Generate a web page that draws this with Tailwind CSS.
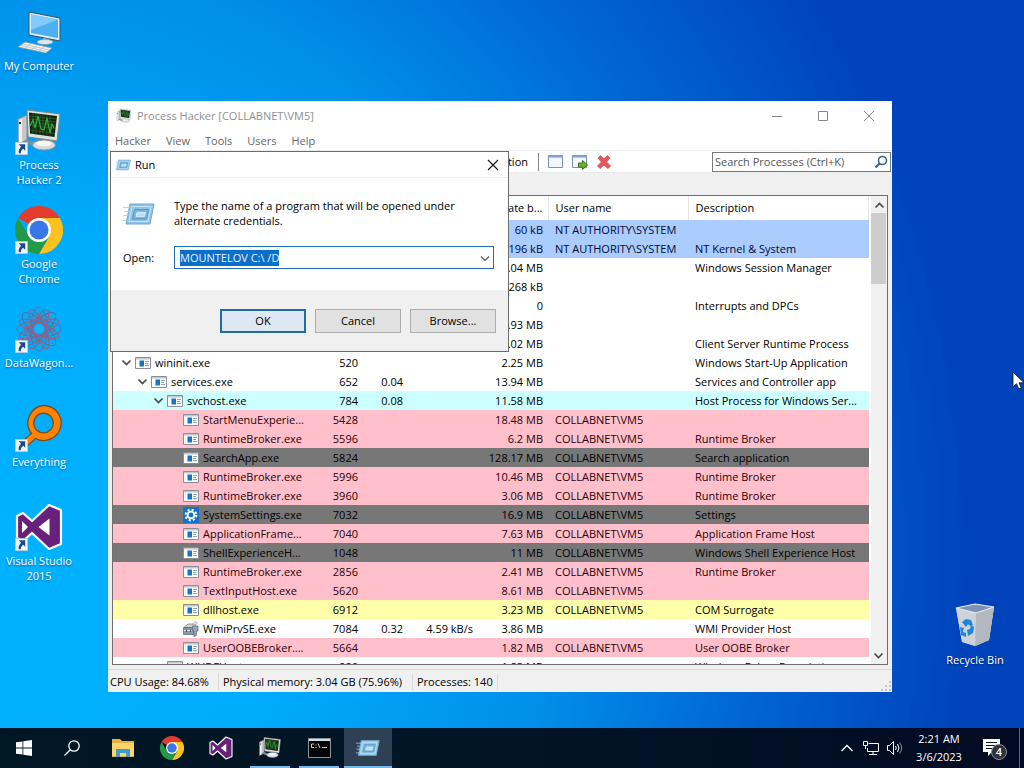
<!DOCTYPE html>
<html lang="en">
<head>
    <meta charset="UTF-8">
    <meta name="viewport" content="width=device-width, initial-scale=1.0">
    <title>Desktop</title>
    <script src="https://cdn.jsdelivr.net/npm/@tailwindcss/browser@4"></script>
</head>
<body class="h-screen flex flex-col overflow-hidden font-['Open_Sans','Noto_Sans',sans-serif] text-[11px] leading-4 text-black cursor-default select-none">

    <!-- Icon library -->
    <svg class="hidden">
        <symbol id="i-app" viewBox="0 0 16 16">
            <path d="M.5 2.500h15v11H.5z" fill="#fff" stroke="#8a8f94"/>
            <path d="M1 3h14v1.500H1z" fill="#c3c8cc"/>
            <path d="M4.500 5.500h4.500v6H4.500z" fill="#1673c4"/>
            <path d="M10 6.500h4M10 8.500h3M10 10.500h4" stroke="#8aa6bd"/>
        </symbol>
        <symbol id="i-gear" viewBox="0 0 16 16">
            <path d="M0 0h16v16H0z" fill="#0f74cc"/>
            <circle cx="8" cy="8" r="5.300" fill="none" stroke="#fff" stroke-width="2.200" stroke-dasharray="2.100 2.060"/>
            <circle cx="8" cy="8" r="3.400" fill="none" stroke="#fff" stroke-width="1.900"/>
        </symbol>
        <symbol id="i-wmi" viewBox="0 0 16 16">
            <path d="M1 6.500l4-3.500h8l-2 3.500z" fill="#cfd4d8" stroke="#6d7780" stroke-width=".7"/>
            <path d="M.5 6.500h10.500v7H.5z" fill="#8d98a3" stroke="#5b6670" stroke-width=".7"/>
            <path d="M1 9.500h9.500" stroke="#dfe5ea"/>
            <path d="M9.500 3l3.500-2.500 1.500 1.500-2 2z" fill="#e6eaee" stroke="#8a949d" stroke-width=".6"/>
            <path d="M9.500 5h5.500v5h-1.500v4.500L11 15.500V10H9.500z" fill="#91a8bf" stroke="#5a6b7c" stroke-width=".7"/>
            <path d="M3.500 8.500v2.500M7.500 8.500v2.500" stroke="#42505c"/>
        </symbol>
        <symbol id="i-chev" viewBox="0 0 16 16">
            <path d="M3.500 5.500l4 4 4-4" fill="none" stroke="#4a4a4a" stroke-width="1.700"/>
        </symbol>
        <symbol id="i-run" viewBox="0 0 32 24">
            <path d="M7 2h24l-4 20H3z" fill="#8fc4e8" stroke="#6fa8d2"/>
            <path d="M9 4.500h19l-3 15H6z" fill="none" stroke="#c6e4f6"/>
            <path d="M11.500 7.500h14l-2 9.500h-14z" fill="#79b5df" stroke="#5794c3"/>
            <path d="M14 10.500h8.500l-1 4h-8.500z" fill="#b9dff5" stroke="#e4f4fd" stroke-width=".8"/>
            <path d="M0 5.500h7M1.500 9.500h5M.5 13.500h5M0 18.500h4" stroke="#a8d2ef"/>
        </symbol>
        <symbol id="i-ph" viewBox="0 0 48 48">
            <path d="M3 12l9-4v26l-9 5z" fill="#c3c8cb" stroke="#888"/>
            <path d="M4 13l3-1v25l-3 1z" fill="#f0f2f2"/>
            <path d="M4 15h2v2H4z" fill="#234"/>
            <path d="M12 32l16 6-5 3-16-6z" fill="#6f91a8"/>
            <ellipse cx="29" cy="38" rx="11.500" ry="5" fill="#d8dcde" stroke="#8c9499"/>
            <ellipse cx="29" cy="36.500" rx="8" ry="2.800" fill="#f5f6f6"/>
            <path d="M12 3l33 4-3 27-29-4z" fill="#dfe2e3" stroke="#7e8588"/>
            <path d="M14 5.500l28 3.500-2.500 21L15 26.500z" fill="#12260f"/>
            <path d="M14.500 9l27 3M14.500 12l26.500 3M15 15l26 3.300M15 18l25 3.500M15 23l25 3.500M18 6v21M21 6.500v21M25 7v21M28 7v21M32 7.500v21M35 8v21" stroke="#33602e" stroke-width=".8"/>
            <path d="M15 19l3-6 2 8 3-12 3 13 3 1 3-12 3 15 2-9 2 4" fill="none" stroke="#2fae3f" stroke-width="1.200"/>
        </symbol>
        <symbol id="i-chrome" viewBox="0 0 48 48">
            <path d="M24 24L3.200 12A24 24 0 0 1 44.800 12z" fill="#e33b2e"/>
            <path d="M24 12h20.800A24 24 0 0 1 24 48l10.400-18z" fill="#fcc31e"/>
            <path d="M3.200 12l10.400 18a12 12 0 0 0 20.800 0L24 48A24 24 0 0 1 3.200 12z" fill="#229a48"/>
            <circle cx="24" cy="24" r="12" fill="#fff"/>
            <circle cx="24" cy="24" r="9.500" fill="#3a76e8"/>
        </symbol>
        <symbol id="i-vs" viewBox="0 0 48 48">
            <path d="M34 2l12 5v34l-12 5-17-16-9 8-6-3V13l6-3 9 8z" fill="#68217a" stroke="#fff" stroke-width="2.200" stroke-linejoin="round"/>
            <path d="M34.500 15.500v17L23.500 24zM7 18v12l6-6z" fill="#fff"/>
        </symbol>
        <symbol id="i-shortcut" viewBox="0 0 14 14">
            <path d="M.5.5h13v13H.5z" fill="#f4f6f8" stroke="#b8c8d6"/>
            <path d="M4 2.500h7v7L8.800 7.300C7 8.500 6.200 10 6.300 12H4C3.500 9 4.500 7 6.500 5z" fill="#1e4a8c"/>
        </symbol>
    </svg>

    <main class="relative flex-1 bg-[radial-gradient(ellipse_95%_140%_at_0%_75%,#00b2ff_0%,#00adfd_30%,#008ee9_58%,#0066d3_78%,#0043bb_100%)]">

        <!-- Desktop shortcuts -->
        <nav class="w-[78px] pt-2 text-white text-center [text-shadow:0_1px_2px_rgba(0,40,90,.6)]">
            <a href="#" class="flex flex-col items-center h-[99px]">
                <svg class="size-12 shrink-0" viewBox="0 0 48 48">
                    <path d="M14 4l31 6v23l-31-6z" fill="#dcebf5" stroke="#34546c"/>
                    <path d="M16 6.500l27 5v18.500l-27-5z" fill="#4db0f2"/>
                    <path d="M16 6.500l27 5L16 22z" fill="#80cbfa"/>
                    <path d="M28 30l6 1v3l-6-1z" fill="#9fb3c0"/>
                    <ellipse cx="30" cy="34" rx="8" ry="2.500" fill="#dfe7ec" stroke="#8c9aa5" stroke-width=".6"/>
                    <path d="M10 34l27 6-6 5-28-6z" fill="#f3f5f6" stroke="#8799a6" stroke-width=".8"/>
                    <path d="M8 36l26 6M6 37.500l26 6M15 36l-5 4M22 37.500l-5 4M29 39l-5 4" stroke="#b3bfc8" stroke-width=".8"/>
                </svg>
                <span class="leading-[15px] pt-[2px]">My Computer</span>
            </a>
            <a href="#" class="flex flex-col items-center h-[99px]">
                <span class="relative size-12 shrink-0">
                    <svg class="size-12"><use href="#i-ph"/></svg>
                    <svg class="absolute left-0 bottom-0 size-[13px]"><use href="#i-shortcut"/></svg>
                </span>
                <span class="leading-[15px] pt-[2px]">Process<br>Hacker 2</span>
            </a>
            <a href="#" class="flex flex-col items-center h-[99px]">
                <span class="relative size-12 shrink-0">
                    <svg class="size-12"><use href="#i-chrome"/></svg>
                    <svg class="absolute left-0 bottom-0 size-[13px]"><use href="#i-shortcut"/></svg>
                </span>
                <span class="leading-[15px] pt-[2px]">Google<br>Chrome</span>
            </a>
            <a href="#" class="flex flex-col items-center h-[99px]">
                <span class="relative size-12 shrink-0">
                    <svg class="size-12" viewBox="0 0 48 48" fill="none" stroke="#55709f">
                        <ellipse cx="24" cy="24" rx="22" ry="8"/>
                        <ellipse cx="24" cy="24" rx="22" ry="8" transform="rotate(45 24 24)"/>
                        <ellipse cx="24" cy="24" rx="22" ry="8" transform="rotate(90 24 24)"/>
                        <ellipse cx="24" cy="24" rx="22" ry="8" transform="rotate(135 24 24)"/>
                        <g stroke="#9c5c80">
                            <ellipse cx="24" cy="24" rx="21" ry="6" transform="rotate(22 24 24)"/>
                            <ellipse cx="24" cy="24" rx="21" ry="6" transform="rotate(67 24 24)"/>
                            <ellipse cx="24" cy="24" rx="21" ry="6" transform="rotate(112 24 24)"/>
                            <ellipse cx="24" cy="24" rx="21" ry="6" transform="rotate(157 24 24)"/>
                            <circle cx="24" cy="24" r="11"/>
                            <circle cx="24" cy="24" r="7"/>
                        </g>
                        <path d="M24 9l11 4 4 11-4 11-11 4-11-4-4-11 4-11z" stroke="#7c6a96"/>
                        <circle cx="24" cy="24" r="4" fill="#1db4f5" stroke="none"/>
                    </svg>
                    <svg class="absolute left-0 bottom-0 size-[13px]"><use href="#i-shortcut"/></svg>
                </span>
                <span class="leading-[15px] pt-[2px]">DataWagon...</span>
            </a>
            <a href="#" class="flex flex-col items-center h-[99px]">
                <span class="relative size-12 shrink-0">
                    <svg class="size-12" viewBox="0 0 48 48">
                        <path d="M28.500 1.500a17.500 17.500 0 1 1-8 33l-12 11-5-5L16.500 29.500a17.500 17.500 0 0 1 12-28z" fill="#ff8200" stroke="#7a4a1c" stroke-width="1.300"/>
                        <circle cx="28.500" cy="19" r="9.800" fill="#04acfb" stroke="#7a4a1c" stroke-width="1.300"/>
                    </svg>
                    <svg class="absolute left-0 bottom-0 size-[13px]"><use href="#i-shortcut"/></svg>
                </span>
                <span class="leading-[15px] pt-[2px]">Everything</span>
            </a>
            <a href="#" class="flex flex-col items-center h-[99px]">
                <span class="relative size-12 shrink-0">
                    <svg class="size-12"><use href="#i-vs"/></svg>
                    <svg class="absolute left-0 bottom-0 size-[13px]"><use href="#i-shortcut"/></svg>
                </span>
                <span class="leading-[15px] pt-[2px]">Visual Studio<br>2015</span>
            </a>
        </nav>

        <a href="#" class="absolute right-[11px] top-[602px] w-[76px] flex flex-col items-center text-white [text-shadow:0_1px_2px_rgba(0,20,70,.7)]">
            <svg class="size-12" viewBox="0 0 48 48">
                <path d="M5 6l19-4 19 3-5 33-14 6-13-4z" fill="#aab4c2"/>
                <path d="M5 6l20 5 18-6-5 33-14 6-13-4z" fill="#cfd3d9"/>
                <path d="M25 11l18-6-5 33-14 6z" fill="#b2b8c1"/>
                <path d="M5 6l19-4 19 3-18 6z" fill="#7e93b8" stroke="#e8edf2" stroke-width="1.200"/>
                <path d="M11 20l4-3 5 1 2 5-3 1-2-2-2 3zM9 25l4 1-1 4 3 1v4l-5-2zM17 34l5-3 1-6-3-2-1 4-3 1z" fill="#1b87dc"/>
            </svg>
            <span class="leading-[15px] pt-[2px]">Recycle Bin</span>
        </a>

        <!-- Process Hacker -->
        <section class="absolute left-[108px] top-[101px] w-[784px] h-[591px] bg-[#f0f0f0] flex flex-col">
            <header class="h-[30px] shrink-0 bg-white flex items-center pl-2 text-[#8f8f8f]">
                <svg class="size-4"><use href="#i-ph"/></svg>
                <h1 class="ml-[5px] flex-1">Process Hacker [COLLABNET\VM5]</h1>
                <button class="w-[46px] h-7 flex justify-center items-center" aria-label="Minimize"><svg class="size-3" viewBox="0 0 12 12" stroke="#888"><path d="M1 6.500h10"/></svg></button>
                <button class="w-[46px] h-7 flex justify-center items-center" aria-label="Maximize"><svg class="size-3" viewBox="0 0 12 12" stroke="#888" fill="none"><path d="M1.500 1.500h9v9h-9z"/></svg></button>
                <button class="w-[46px] h-7 flex justify-center items-center" aria-label="Close"><svg class="size-3" viewBox="0 0 12 12" stroke="#888"><path d="M1 1l10 10M11 1L1 11"/></svg></button>
            </header>
            <nav class="h-[19px] shrink-0 bg-white flex items-center gap-[15px] pl-[7px] text-[#666]">
                <button>Hacker</button>
                <button>View</button>
                <button>Tools</button>
                <button>Users</button>
                <button>Help</button>
            </nav>
            <div class="h-[23px] shrink-0 bg-white border-y border-[#ececec] flex items-center">
                <button class="w-[420px] text-right">System information</button>
                <span class="ml-[10px] w-px h-[18px] bg-[#888]"></span>
                <button class="ml-[9px]" aria-label="Window"><svg class="size-4" viewBox="0 0 16 16"><path d="M.5 1.500h14v12H.5z" fill="#f3f7fb" stroke="#7493b5"/><path d="M0 1h15v2.500H0z" fill="#7ba0da"/></svg></button>
                <button class="ml-2" aria-label="Find window"><svg class="size-4" viewBox="0 0 16 16"><path d="M.5 1.500h14v12H.5z" fill="#f3f7fb" stroke="#7493b5"/><path d="M0 1h15v2.500H0z" fill="#7ba0da"/><path d="M6.500 9h4V6.500l5 4.500-5 4.500V13h-4z" fill="#6ab42d" stroke="#39761a"/></svg></button>
                <button class="ml-2" aria-label="Terminate"><svg class="size-4" viewBox="0 0 16 16"><path d="M2 4l2.500-2.500L8 5l3.500-3.500L14 4l-3.500 4 4 4-2.500 2.500L8 11l-4 3.500L1.500 12l4-4z" fill="#e8555b" stroke="#cf4a50" stroke-width=".8"/></svg></button>
                <div class="ml-auto mr-px w-[179px] h-5 border border-[#7a7a7a] bg-white flex items-center pr-px">
                    <input type="search" aria-label="Search Processes" placeholder="Search Processes (Ctrl+K)" class="min-w-0 flex-1 pl-[2px] h-4 outline-none placeholder:text-[#555]">
                    <svg class="size-4" viewBox="0 0 16 16" fill="none"><circle cx="9.500" cy="6.500" r="4" stroke="#35648c" stroke-width="1.600"/><path d="M6.500 9.500L2.500 13.500" stroke="#35648c" stroke-width="2.300"/></svg>
                </div>
            </div>
            <div class="h-[22px] shrink-0 bg-[#f0f0f0]"></div>

            <div class="flex-1 min-h-0 mx-1 border border-[#6e6e6e] bg-white flex">
                <div class="flex-1 min-w-0 overflow-hidden">
                    <table class="w-full table-fixed border-collapse">
                        <colgroup>
                            <col class="w-[199px]"><col class="w-[51px]"><col class="w-[45px]"><col class="w-[70px]"><col class="w-[70px]"><col class="w-[140px]"><col>
                        </colgroup>
                        <thead>
                            <tr class="h-6 text-left *:font-normal *:p-0 *:whitespace-nowrap *:border-r *:border-[#e5e5e5]">
                                <th>Name</th><th>PID</th><th>CPU</th><th>I/O total r...</th>
                                <th><div class="pr-[5px] text-right">Private b...</div></th>
                                <th><div class="pl-[7px]">User name</div></th>
                                <th><div class="pl-[7px]">Description</div></th>
                            </tr>
                        </thead>
                        <tbody id="rows"></tbody>
                    </table>
                </div>
                <div class="ml-[2px] w-4 bg-[#f0f0f0] flex flex-col">
                    <button class="h-[17px]" aria-label="Scroll up"><svg class="size-4 rotate-180"><use href="#i-chev"/></svg></button>
                    <div class="h-[71px] w-[15px] bg-[#cdcdcd]"></div>
                    <button class="mt-auto h-[17px]" aria-label="Scroll down"><svg class="size-4"><use href="#i-chev"/></svg></button>
                </div>
            </div>

            <footer class="mt-1 h-[23px] shrink-0 flex items-center pt-px border-t border-[#dcdcdc]">
                <span class="pl-[2px] w-[111px] border-r border-[#d9d9d9]">CPU Usage: 84.68%</span>
                <span class="pl-1 w-[194px] border-r border-[#d9d9d9]">Physical memory: 3.04 GB (75.96%)</span>
                <span class="pl-1 w-[85px] border-r border-[#d9d9d9]">Processes: 140</span>
                <svg class="ml-auto self-end size-3" viewBox="0 0 12 12" fill="#c4c4c4"><path d="M9 1h2v2H9zM9 5h2v2H9zM9 9h2v2H9zM5 5h2v2H5zM5 9h2v2H5zM1 9h2v2H1z"/></svg>
            </footer>
        </section>

        <!-- Run dialog -->
        <form class="absolute left-[110px] top-[151px] w-[399px] h-[201px] bg-white border border-[#6b6b6b] flex flex-col">
            <header class="h-[26px] shrink-0 flex items-center pl-1 pr-[9px] border-b border-[#ececec]">
                <svg class="w-4 h-3"><use href="#i-run"/></svg>
                <h2 class="ml-1 flex-1">Run</h2>
                <button type="button" aria-label="Close"><svg class="size-3" viewBox="0 0 12 12" stroke="#111" stroke-width="1.100"><path d="M1 1l10 10M11 1L1 11"/></svg></button>
            </header>
            <div class="flex-1 pt-5 pl-3 pr-[14px]">
                <div class="flex">
                    <svg class="mt-1 w-8 h-6"><use href="#i-run"/></svg>
                    <p class="ml-[19px] leading-[15px]">Type the name of a program that will be opened under<br>alternate credentials.</p>
                </div>
                <div class="mt-[18px] flex items-center">
                    <label for="open" class="w-[51px]">Open:</label>
                    <div class="flex-1 h-[23px] border border-[#1f72ad] flex items-center pl-[5px]">
                        <input id="open" value="MOUNTELOV C:\ /D" class="flex-1 min-w-0 h-4 outline-none select-text selection:bg-[#0a6fc9] selection:text-[#e6f3ff]">
                        <button type="button" class="w-4" aria-label="Show list"><svg class="size-4" viewBox="0 0 16 16" fill="none" stroke="#555" stroke-width="1.200"><path d="M4 6.500l4 4 4-4"/></svg></button>
                    </div>
                </div>
            </div>
            <footer class="h-[61px] shrink-0 bg-[#f0f0f0] flex items-start justify-end gap-[9px] pt-[19px] pr-3">
                <button type="submit" class="w-[86px] h-6 bg-[#dde8f2] border-2 border-[#1f6ca3]">OK</button>
                <button type="button" class="w-[86px] h-6 bg-[#e1e1e1] border border-[#adadad]">Cancel</button>
                <button type="button" class="w-[86px] h-6 bg-[#e1e1e1] border border-[#adadad]">Browse...</button>
            </footer>
        </form>

        <svg class="absolute right-0 top-[371px] w-3 h-5" viewBox="0 0 12 20"><path d="M1 1v15l3.500-3.300 2.300 5.300 2.500-1-2.300-5.200H12z" fill="#fff" stroke="#111" stroke-width=".8"/></svg>
    </main>

    <!-- Taskbar -->
    <footer class="h-10 shrink-0 flex items-center bg-linear-to-r from-[#001724] via-[#021426] to-[#020b22] text-white">
        <button class="w-12 h-10 flex justify-center items-center" aria-label="Start"><svg class="size-4" viewBox="0 0 16 16" fill="#fff"><path d="M0 2.300l6.500-.9v6.200H0zM7.300 1.300L16 0v7.600H7.300zM0 8.400h6.500v6.200L0 13.700zM7.300 8.400H16V16l-8.700-1.300z"/></svg></button>
        <button class="w-12 h-10 flex justify-center items-center" aria-label="Search"><svg class="size-4" viewBox="0 0 16 16" fill="none" stroke="#fff" stroke-width="1.300"><circle cx="10" cy="6" r="5.200"/><path d="M6.300 9.700L.5 15.500"/></svg></button>
        <div class="flex gap-px ml-[3px]">
            <button class="w-12 h-10 flex justify-center items-center" aria-label="File Explorer">
                <svg class="w-[22px] h-5" viewBox="0 0 22 20"><path d="M0 1h8l2 2h12v16H0z" fill="#e9b23e"/><path d="M0 5h22v13H0z" fill="#fcd668"/><path d="M4 11h14v8h-4v-4H8v4H4z" fill="#3f9bcf"/></svg>
            </button>
            <button class="w-12 h-10 flex justify-center items-center" aria-label="Google Chrome"><svg class="size-6"><use href="#i-chrome"/></svg></button>
            <button class="w-12 h-10 flex justify-center items-center" aria-label="Visual Studio"><svg class="size-6"><use href="#i-vs"/></svg></button>
            <button class="w-12 h-10 relative flex justify-center items-center" aria-label="Process Hacker"><svg class="size-6"><use href="#i-ph"/></svg><span class="absolute bottom-0 inset-x-1 h-[2px] bg-[#76b9ed]"></span></button>
            <button class="w-12 h-10 relative flex justify-center items-center" aria-label="Command Prompt">
                <svg class="w-[23px] h-5" viewBox="0 0 23 20"><path d="M.5.500h22v19H.5z" fill="#060606" stroke="#8d9499"/><path d="M1 1h21v2H1z" fill="#d9dde0"/><path d="M6 6H3.500v3.500H6M8 6.500v1M8 9v1M10 5.500l2 4.500M14 9.500h5" stroke="#d0d0d0" fill="none"/></svg>
                <span class="absolute bottom-0 inset-x-1 h-[2px] bg-[#76b9ed]"></span>
            </button>
            <button class="w-12 h-10 relative flex justify-center items-center bg-[#2e4154]" aria-label="Run"><svg class="w-6 h-[18px]"><use href="#i-run"/></svg><span class="absolute bottom-0 inset-x-0 h-[2px] bg-[#76b9ed]"></span></button>
        </div>
        <div class="ml-auto flex items-center">
            <button class="w-6 flex justify-center" aria-label="Hidden icons"><svg class="w-3 h-4" viewBox="0 0 12 16" fill="none" stroke="#fff" stroke-width="1.300"><path d="M.5 11L6 5.500 11.500 11"/></svg></button>
            <svg class="size-4 ml-1" viewBox="0 0 16 16" fill="none" stroke="#fff"><path d="M5.500 3.500h10v8h-11V8M10 12v2.500M6 14.500h8M.5 1.500h4v4h-4zM2.500 6v3"/></svg>
            <svg class="size-4 ml-2" viewBox="0 0 16 16" fill="none" stroke="#fff"><path d="M.5 5.500h2l4-4v13l-4-4h-2zM8.500 6q1.500 2 0 4M10.500 4q3 4 0 8"/><path d="M12.500 2.500q4.500 5.500 0 11" stroke="#8b95a3"/></svg>
            <time class="w-[72px] text-center leading-[18px]">2:21 AM<br>3/6/2023</time>
            <button class="relative ml-2 w-6 h-6" aria-label="Notifications, 4 new">
                <svg class="w-[17px] h-[18px]" viewBox="0 0 17 18"><path d="M0 0h17v13h-8l-4 4v-4H0z" fill="#fff"/><path d="M3 3.500h11M3 6.500h11M3 9.500h7" stroke="#061326"/></svg>
                <span class="absolute left-[8px] top-2 size-4 rounded-full border border-[#8a919c] bg-[#2b3340] text-[11px] leading-[14px] font-semibold">4</span>
            </button>
            <span class="ml-3 mr-1 w-px h-10 bg-[#5b6676]"></span>
        </div>
    </footer>

    <script>
        const colors = {
            blue: 'bg-[#aaccff] text-[#000a33]',
            cyan: 'bg-[#ccffff]',
            pink: 'bg-[#ffc0cb] text-[#2b0008]',
            gray: 'bg-[#777777]',
            yellow: 'bg-[#ffffaa]',
            none: 'bg-white'
        };
        const indents = ['pl-[6px]', 'pl-[22px]', 'pl-[38px]', 'pl-[54px]'];

        // color, level, icon, expanded, name, pid, cpu, io, private, user, description
        const rows = [
            ['blue', 0, 'app', 0, 'System Idle Process', '0', '', '', '60 kB', 'NT AUTHORITY\\SYSTEM', ''],
            ['blue', 0, 'app', 1, 'System', '4', '', '', '196 kB', 'NT AUTHORITY\\SYSTEM', 'NT Kernel &amp; System'],
            ['none', 1, 'app', 0, 'smss.exe', '', '', '', '1.04 MB', '', 'Windows Session Manager'],
            ['none', 1, 'app', 0, 'Memory Compression', '', '', '', '268 kB', '', ''],
            ['none', 1, 'app', 0, 'Interrupts', '', '', '', '0', '', 'Interrupts and DPCs'],
            ['none', 0, 'app', 0, 'Registry', '', '', '', '1.93 MB', '', ''],
            ['none', 0, 'app', 0, 'csrss.exe', '', '', '', '2.02 MB', '', 'Client Server Runtime Process'],
            ['none', 0, 'app', 1, 'wininit.exe', '520', '', '', '2.25 MB', '', 'Windows Start-Up Application'],
            ['none', 1, 'app', 1, 'services.exe', '652', '0.04', '', '13.94 MB', '', 'Services and Controller app'],
            ['cyan', 2, 'app', 1, 'svchost.exe', '784', '0.08', '', '11.58 MB', '', 'Host Process for Windows Ser...'],
            ['pink', 3, 'app', 0, 'StartMenuExperie...', '5428', '', '', '18.48 MB', 'COLLABNET\\VM5', ''],
            ['pink', 3, 'app', 0, 'RuntimeBroker.exe', '5596', '', '', '6.2 MB', 'COLLABNET\\VM5', 'Runtime Broker'],
            ['gray', 3, 'app', 0, 'SearchApp.exe', '5824', '', '', '128.17 MB', 'COLLABNET\\VM5', 'Search application'],
            ['pink', 3, 'app', 0, 'RuntimeBroker.exe', '5996', '', '', '10.46 MB', 'COLLABNET\\VM5', 'Runtime Broker'],
            ['pink', 3, 'app', 0, 'RuntimeBroker.exe', '3960', '', '', '3.06 MB', 'COLLABNET\\VM5', 'Runtime Broker'],
            ['gray', 3, 'gear', 0, 'SystemSettings.exe', '7032', '', '', '16.9 MB', 'COLLABNET\\VM5', 'Settings'],
            ['pink', 3, 'app', 0, 'ApplicationFrame...', '7040', '', '', '7.63 MB', 'COLLABNET\\VM5', 'Application Frame Host'],
            ['gray', 3, 'app', 0, 'ShellExperienceH...', '1048', '', '', '11 MB', 'COLLABNET\\VM5', 'Windows Shell Experience Host'],
            ['pink', 3, 'app', 0, 'RuntimeBroker.exe', '2856', '', '', '2.41 MB', 'COLLABNET\\VM5', 'Runtime Broker'],
            ['pink', 3, 'app', 0, 'TextInputHost.exe', '5620', '', '', '8.61 MB', 'COLLABNET\\VM5', ''],
            ['yellow', 3, 'app', 0, 'dllhost.exe', '6912', '', '', '3.23 MB', 'COLLABNET\\VM5', 'COM Surrogate'],
            ['none', 3, 'wmi', 0, 'WmiPrvSE.exe', '7084', '0.32', '4.59 kB/s', '3.86 MB', '', 'WMI Provider Host'],
            ['pink', 3, 'app', 0, 'UserOOBEBroker....', '5664', '', '', '1.82 MB', 'COLLABNET\\VM5', 'User OOBE Broker'],
            ['none', 2, 'app', 0, 'WUDFHost.exe', '920', '', '', '1.83 MB', '', 'Windows Driver Foundation...']
        ];

        document.getElementById('rows').innerHTML = rows.map(([color, level, icon, open, name, pid, cpu, io, priv, user, desc]) => `
            <tr class="h-[19px] whitespace-nowrap ${colors[color]}">
                <td class="p-0"><div class="flex items-center ${indents[level]}">
                    <span class="w-4 shrink-0">${open ? '<svg class="size-4"><use href="#i-chev"/></svg>' : ''}</span>
                    <svg class="size-4 shrink-0"><use href="#i-${icon}"/></svg>
                    <span class="ml-1">${name}</span>
                </div></td>
                <td class="p-0 pr-[5px] text-right">${pid}</td>
                <td class="p-0 pr-[5px] text-right">${cpu}</td>
                <td class="p-0 pr-[5px] text-right">${io}</td>
                <td class="p-0 pr-[5px] text-right">${priv}</td>
                <td class="p-0 pl-[7px]">${user}</td>
                <td class="p-0 pl-[7px]">${desc}</td>
            </tr>`).join('');

        const openBox = document.getElementById('open');
        openBox.focus();
        openBox.select();
    </script>
</body>
</html>
